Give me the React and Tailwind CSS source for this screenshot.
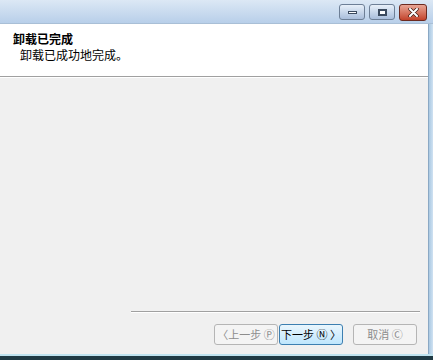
export default function App() {
  const cjk = { fontFamily: '"Noto Sans CJK SC", "Liberation Sans", sans-serif' };
  return (
    <div className="w-[433px] h-[360px] flex flex-col overflow-hidden bg-[#f0f0f0]" style={cjk}>
      {/* title bar */}
      <div className="h-[24px] flex items-start justify-end pr-[6px] pt-[4px] gap-[4px] bg-gradient-to-b from-[#dce8f5] to-[#b8cfe9] border-b border-[#a9bfd6]">
        <div className="w-[26px] h-[16px] rounded-[3px] border border-[#6d7f96] bg-gradient-to-b from-[#e8f0f9] to-[#a9bedb] flex items-center justify-center">
          <div className="w-[9px] h-[3px] bg-white border border-[#3b4a5e]" />
        </div>
        <div className="w-[26px] h-[16px] rounded-[3px] border border-[#6d7f96] bg-gradient-to-b from-[#e8f0f9] to-[#a9bedb] flex items-center justify-center">
          <div className="w-[9px] h-[7px] bg-white border-[2px] border-[#3b4a5e]" />
        </div>
        <div className="w-[28px] h-[17px] rounded-[3px] border border-[#6b2a20] bg-gradient-to-b from-[#e8a595] to-[#c2412a] flex items-center justify-center">
          <svg width="11" height="9" viewBox="0 0 11 9">
            <path d="M2 1 L9 8 M9 1 L2 8" stroke="#3a1a14" strokeWidth="3.4" strokeLinecap="round" />
            <path d="M2 1 L9 8 M9 1 L2 8" stroke="#ffffff" strokeWidth="2" strokeLinecap="round" />
          </svg>
        </div>
      </div>

      <div className="flex flex-1 min-h-0">
        <div className="flex-1 flex flex-col min-w-0">
          {/* header */}
          <div className="h-[53px] bg-white border-b border-[#a0a0a0] pl-[13px] pt-[7px]">
            <div className="text-[12px] leading-[16px] font-bold text-black">卸载已完成</div>
            <div className="text-[12px] leading-[16px] text-black pl-[7px]">卸载已成功地完成。</div>
          </div>
          <div className="h-px bg-white" />

          {/* body */}
          <div className="flex-1 flex flex-col justify-end">
            <div className="ml-[131px] mr-[8px] h-px bg-[#a0a0a0] border-b border-white box-content" />
            <div className="flex justify-end items-center pr-[11px] pt-[11px] pb-[9px]">
              <button className="w-[64px] h-[21px] rounded-[3px] border border-[#b5b5b5] bg-[#f4f4f4] text-[11px] text-[#8d8d8d] leading-none flex items-center justify-center">
                〈上一步 Ⓟ
              </button>
              <button className="w-[64px] h-[21px] ml-[1px] rounded-[3px] border border-[#3c7fb1] bg-gradient-to-b from-[#eaf6fd] to-[#bee6fd] text-[11px] text-black leading-none flex items-center justify-center">
                下一步 Ⓝ 〉
              </button>
              <button className="w-[64px] h-[21px] ml-[10px] rounded-[3px] border border-[#b5b5b5] bg-[#f4f4f4] text-[11px] text-[#8d8d8d] leading-none flex items-center justify-center">
                取消 Ⓒ
              </button>
            </div>
          </div>
        </div>
        {/* right frame */}
        <div className="w-[5px] bg-gradient-to-r from-[#a9c8e2] to-[#d0e2f2] border-l border-[#8aa8c4]" />
      </div>
      {/* bottom frame */}
      <div className="h-[2px] bg-[#bfe3ef]" />
      <div className="h-[4px] bg-[#1f3a44]" />
    </div>
  );
}
